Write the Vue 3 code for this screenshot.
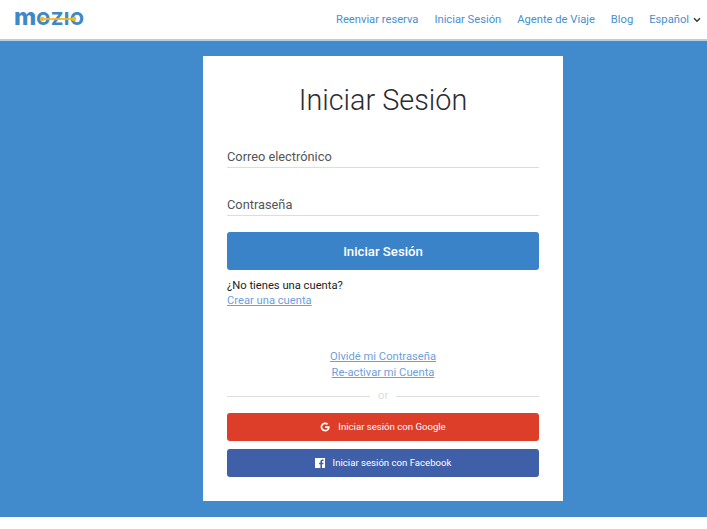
<script setup>
const navLinks = ['Reenviar reserva', 'Iniciar Sesión', 'Agente de Viaje', 'Blog']
</script>

<template>
  <div class="page">
    <header class="topbar">
      <a class="logo" aria-label="Mozio">
        <span class="logo-word"><span class="logo-m">m</span>OZIO</span>
        <svg class="logo-line" width="38" height="6" viewBox="0 0 38 6">
          <line x1="3" y1="3" x2="35" y2="3" stroke="#f6b91c" stroke-width="1.8" />
          <circle cx="3" cy="3" r="2.3" fill="#f6b91c" />
          <circle cx="35" cy="3" r="2.3" fill="#f6b91c" />
        </svg>
      </a>
      <nav class="nav">
        <a v-for="l in navLinks" :key="l" class="nav-link">{{ l }}</a>
        <a class="nav-link lang">Español
          <svg class="chev" width="8" height="6" viewBox="0 0 8 6">
            <path d="M1 1.2 L4 4.2 L7 1.2" fill="none" stroke="#33383d" stroke-width="1.5" />
          </svg>
        </a>
      </nav>
    </header>

    <main class="stage">
      <section class="card">
        <h1 class="title">Iniciar Sesión</h1>
        <div class="field first">Correo electrónico</div>
        <div class="field second">Contraseña</div>
        <button class="btn primary">Iniciar Sesión</button>
        <p class="signup">¿No tienes una cuenta?</p>
        <a class="link signup-link">Crear una cuenta</a>
        <div class="recover">
          <a class="link">Olvidé mi Contraseña</a>
          <a class="link">Re-activar mi Cuenta</a>
        </div>
        <div class="divider"><span>or</span></div>
        <button class="btn social google">
          <svg width="10" height="10" viewBox="0 0 24 24">
            <path fill="#fff" d="M12.2 10v4.2h6.3c-.6 2.9-3 4.6-6.3 4.6a6.8 6.8 0 1 1 4.5-11.9l3.1-3.1A11 11 0 1 0 12.2 23c6 0 11-4.300 11-11 0-.7-.1-1.400-.2-2z" />
          </svg>
          Iniciar sesión con Google
        </button>
        <button class="btn social facebook">
          <svg width="10" height="10" viewBox="0 0 10 10">
            <path fill="#fff" d="M0 0h10v10H7V6.200h1.300l.2-1.500H7v-1c0-.5.200-.8.800-.8h.8V1.500C8.300 1.500 7.900 1.400 7.400 1.400 6.200 1.400 5.400 2.100 5.400 3.500v1.200H4.100v1.500h1.300V10H0z" />
          </svg>
          Iniciar sesión con Facebook
        </button>
      </section>
    </main>
  </div>
</template>

<style>
html, body { margin: 0; background: #fff; }
</style>

<style scoped>
.page {
  width: 707px;
  height: 529px;
  font-family: Roboto, "Liberation Sans", sans-serif;
  overflow: hidden;
  background: #fff;
}
.topbar {
  height: 39px;
  box-sizing: content-box;
  background: #fff;
  border-bottom: 2px solid #b9cfe0;
  display: flex;
  align-items: center;
  justify-content: space-between;
  padding: 0 6px 0 14px;
}
.logo {
  position: relative;
  display: block;
  line-height: 1;
}
.logo-word {
  font-family: Inter, sans-serif;
  font-weight: 800;
  font-size: 18px;
  color: #3f88c8;
  letter-spacing: 0.8px;
  display: block;
  line-height: 26px;
  margin-top: -2px;
}
.logo-m {
  font-size: 24px;
  letter-spacing: 0;
  line-height: 1;
}
.logo-line {
  position: absolute;
  left: 25px;
  top: 9px;
}
.nav {
  display: flex;
  align-items: center;
  gap: 16px;
  font-size: 11.2px;
}
.nav-link {
  color: #4a8fce;
  white-space: nowrap;
}
.lang {
  display: flex;
  align-items: center;
  gap: 4px;
}
.stage {
  height: 476px;
  background: #418acb;
  padding-top: 15px;
  box-sizing: border-box;
}
.card {
  width: 360px;
  height: 445px;
  margin-left: 203px;
  background: #fff;
  padding: 0 24px;
  box-sizing: border-box;
  display: flow-root;
}
.title {
  margin: 24px 0 0;
  font-weight: 300;
  font-size: 28.8px;
  line-height: 40px;
  text-align: center;
  color: #2b2b33;
}
.field {
  font-size: 12.8px;
  line-height: 20px;
  color: #555;
  height: 20px;
  border-bottom: 1px solid #ddd;
}
.first { margin-top: 27px; }
.second { margin-top: 27px; }
.btn {
  display: flex;
  align-items: center;
  justify-content: center;
  width: 100%;
  border: 0;
  border-radius: 3px;
  color: #fff;
  font-family: inherit;
  padding: 0;
}
.primary {
  margin-top: 16px;
  height: 38px;
  background: #3a83c8;
  font-size: 13.2px;
  font-weight: 500;
}
.signup {
  margin: 8px 0 0;
  font-size: 11.2px;
  line-height: 15px;
  color: #222;
}
.link {
  font-size: 11.2px;
  line-height: 16px;
  color: #6f9fd8;
  text-decoration: underline;
}
.signup-link { display: block; }
.recover {
  margin-top: 40px;
  display: flex;
  flex-direction: column;
  align-items: center;
}
.divider {
  margin-top: 8px;
  height: 14px;
  display: flex;
  align-items: center;
  gap: 8px;
  font-size: 11.2px;
  color: #ddd;
}
.divider::before,
.divider::after {
  content: "";
  flex: 1;
  border-top: 1px solid #ddd;
}
.divider span { width: 10px; text-align: center; margin-top: -2px; }
.social {
  height: 28px;
  font-size: 9.6px;
  font-weight: 400;
  gap: 8px;
  padding-bottom: 1px;
}
.google { margin-top: 10px; background: #dc3e2a; }
.facebook { margin-top: 8px; background: #3f60a8; }
</style>
